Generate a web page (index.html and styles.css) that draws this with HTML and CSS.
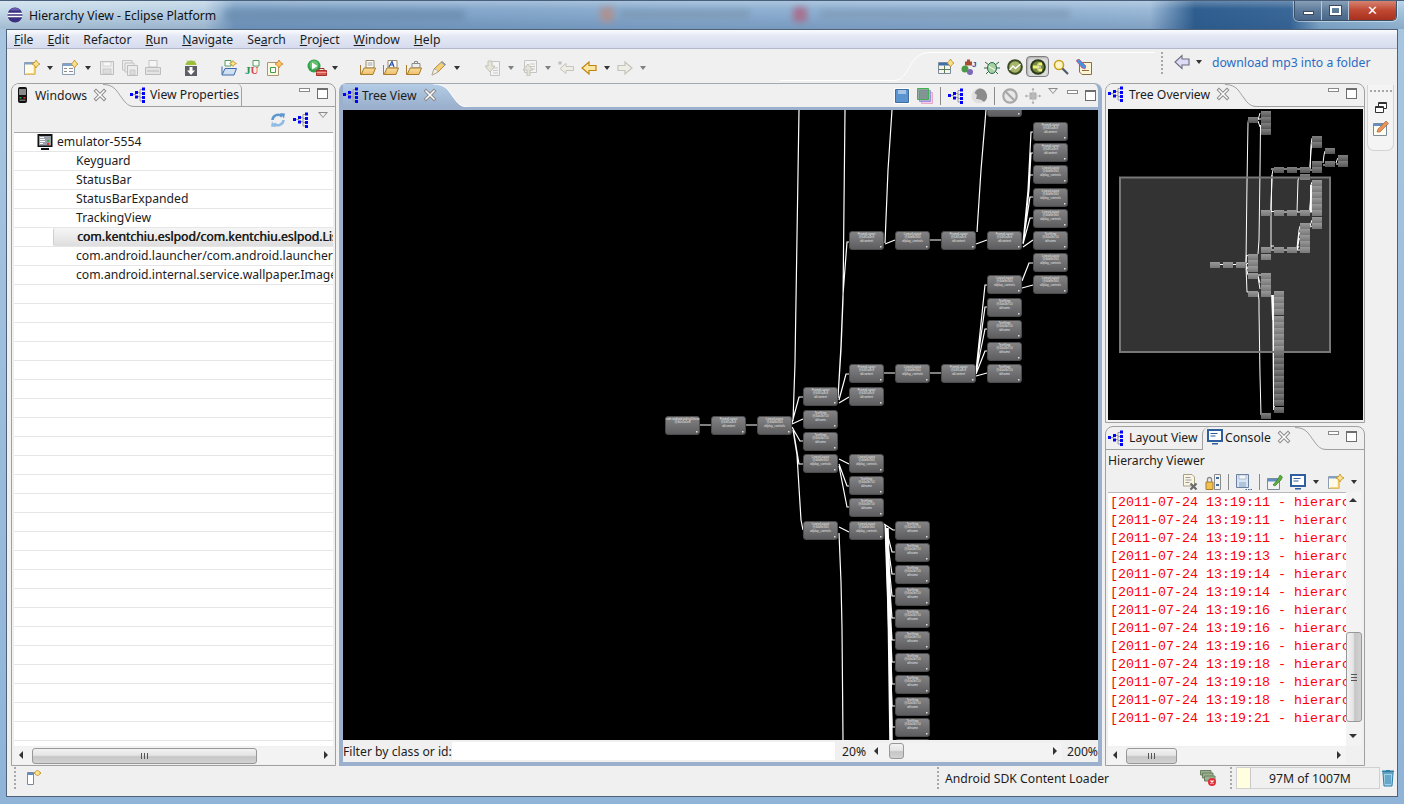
FILE: index.html
```html
<!DOCTYPE html>
<html lang="en">
<head>
  <meta charset="UTF-8">
  <title>Hierarchy View - Eclipse Platform</title>
  <link rel="stylesheet" href="styles.css">
</head>
<body>
  <!-- shared icons -->
  <svg class="sprite" xmlns="http://www.w3.org/2000/svg">
    <defs>
      <linearGradient id="g-node" x1="0" y1="0" x2="0" y2="1"><stop offset="0" stop-color="#848487"/><stop offset="1" stop-color="#5c5c5f"/></linearGradient>
      <linearGradient id="g-ov" x1="0" y1="0" x2="0" y2="1"><stop offset="0" stop-color="#808080"/><stop offset="1" stop-color="#565656"/></linearGradient>
      <linearGradient id="g-tab" x1="0" y1="0" x2="0" y2="1"><stop offset="0" stop-color="#b4cce6"/><stop offset="1" stop-color="#9ab0cc"/></linearGradient>
      <linearGradient id="g-folder" x1="0" y1="0" x2="0" y2="1"><stop offset="0" stop-color="#fdeab8"/><stop offset="1" stop-color="#eebf68"/></linearGradient>
    </defs>
    <symbol id="i-tree" viewBox="0 0 16 16">
      <path d="M3 7.500H6M8 5.500H10M8 9.500H10M10 2.500V14M10 2.500H12M10 6.500H12M10 10.500H12M10 14H12" fill="none" stroke="#9a9a9a"/>
      <path fill="#0000ff" d="M0 6h3v3H0zM5 4h3v3H5zM5 8.500h3v3H5zM12 0.500h3v3h-3zM12 5h3v3h-3zM12 9h3v3h-3zM12 13h3v3h-3z"/>
    </symbol>
    <symbol id="i-close" viewBox="0 0 16 16">
      <path d="M4 4L12 12M12 4L4 12" stroke="#8a8a8a" stroke-width="3.400" stroke-linecap="square" fill="none"/>
      <path d="M4 4L12 12M12 4L4 12" stroke="#fff" stroke-width="1.500" stroke-linecap="square" fill="none"/>
    </symbol>
    <symbol id="i-min" viewBox="0 0 16 16"><rect x="1.500" y="2.500" width="10" height="3" fill="#fff" stroke="#8a8a8a"/></symbol>
    <symbol id="i-max" viewBox="0 0 16 16"><rect x="1.500" y="2.500" width="10" height="10" fill="#fff" stroke="#6e6e6e"/><path d="M2 3.500H11" stroke="#6e6e6e"/></symbol>
    <symbol id="i-new" viewBox="0 0 16 16">
      <path d="M.5 2.500H11V14.500H.5z" fill="#fffbe8" stroke="#8d9db2"/><path d="M1 3h9v1.500H1z" fill="#7ea2cc"/>
      <path d="M10.500 5V14H2" fill="none" stroke="#f0c860" stroke-width="1.500"/>
      <path d="M12 0L13.500 2.500L16 4L13.500 5.500L12 8L10.500 5.500L8 4L10.500 2.500z" fill="#fbe28a" stroke="#c08a20" stroke-width=".8"/>
    </symbol>
    <symbol id="i-newtable" viewBox="0 0 16 16">
      <path d="M.5 3.500H12.500V14.500H.5z" fill="#fbfbfb" stroke="#8d9db2"/><path d="M1 4h11v2H1z" fill="#7ea2cc"/>
      <path d="M2 8h3v1H2zM2 11h3v1H2zM7 8h4v1H7zM7 11h4v1H7z" fill="#8d8d8d"/>
      <path d="M12.500 0L14 2.500L16 4L14 5.500L12.500 8L11 5.500L9 4L11 2.500z" fill="#fbe28a" stroke="#c08a20" stroke-width=".8"/>
    </symbol>
    <symbol id="i-save" viewBox="0 0 16 16">
      <path d="M1.500 1.500H14.500V14.500H1.500z" fill="#ececec" stroke="#bdbdbd"/><path d="M4 2h8v4H4z" fill="#f8f8f8" stroke="#c8c8c8" stroke-width=".7"/><path d="M4 9h8v5H4z" fill="#dcdcdc" stroke="#c0c0c0" stroke-width=".7"/>
    </symbol>
    <symbol id="i-saveall" viewBox="0 0 16 16">
      <path d="M.5 .5H10V10H.5z" fill="#ececec" stroke="#c4c4c4"/><path d="M3 3H12V12H3z" fill="#ececec" stroke="#c4c4c4"/><path d="M5.500 5.500H15.500V15.500H5.500z" fill="#ececec" stroke="#bdbdbd"/><path d="M8 10h5v5H8z" fill="#dcdcdc" stroke="#c0c0c0" stroke-width=".7"/>
    </symbol>
    <symbol id="i-print" viewBox="0 0 16 16">
      <path d="M4 .5H12V7H4z" fill="#f6f6f6" stroke="#c4c4c4"/><path d="M.5 7.500H15.500V14.500H.5z" fill="#e4e4e4" stroke="#bdbdbd"/><path d="M2 10h12v2H2z" fill="#cfcfcf"/>
    </symbol>
    <symbol id="i-android" viewBox="0 0 16 16">
      <path d="M2.500 5a5.500 4.500 0 0 1 11 0z" fill="#9bbf3c"/><path d="M4 .5L5.500 2M12 .5L10.500 2" stroke="#9bbf3c"/>
      <path d="M2 6h12v10H2z" fill="#5c6066"/><path d="M6.500 7h3v3.500H12L8 15L4 10.500h2.500z" fill="#fff"/>
    </symbol>
    <symbol id="i-openclass" viewBox="0 0 16 16">
      <path d="M4 .5H10V6H4z" fill="#fff" stroke="#4f9f5f"/><path d="M12 .5L13.200 2.300L15.500 3.500L13.200 4.700L12 6.500L10.800 4.700L8.500 3.500L10.800 2.300z" fill="#fbe28a" stroke="#c08a20" stroke-width=".7"/>
      <path d="M1 6.500V15H13L15.500 8.500H4L1.500 14" fill="#cfe0f4" stroke="#3a68a8"/>
    </symbol>
    <symbol id="i-newclass" viewBox="0 0 16 16">
      <path d="M.5 2.500H11.500V15.500H.5z" fill="#fff7e0" stroke="#a89878"/><path d="M3.500 7.500H8.500V12.500H3.500z" fill="#fff" stroke="#3f9f4f"/>
      <path d="M12 0L13.500 2.500L16 4L13.500 5.500L12 8L10.500 5.500L8 4L10.500 2.500z" fill="#f8c868" stroke="#d07820" stroke-width=".8"/>
    </symbol>
    <symbol id="i-run" viewBox="0 0 21 17">
      <circle cx="7" cy="7" r="6.500" fill="#2fa04c"/><circle cx="7" cy="6" r="4.500" fill="#66c070"/><path d="M5 3.500L10.500 7L5 10.500z" fill="#fff"/>
      <path d="M9.500 11.500H19.500V16.500H9.500z" fill="#d85a50" stroke="#a03028"/><path d="M12 11.500V9.500H17V11.500" fill="none" stroke="#a03028"/><path d="M9.500 13.500H19.500" stroke="#f0a098"/>
    </symbol>
    <symbol id="i-folderdoc" viewBox="0 0 16 16">
      <path d="M6 .5H14V8H6z" fill="#fff" stroke="#9a8a68"/><path d="M7.500 3h5M7.500 5h5" stroke="#9a9a9a"/>
      <path d="M.5 5V14.500H13L15.500 8H4L1.500 14" fill="url(#g-folder)" stroke="#a87c2c"/>
    </symbol>
    <symbol id="i-folderfont" viewBox="0 0 16 16">
      <path d="M5 .5H14V8H5z" fill="#fff" stroke="#9a8a68"/><path d="M6 7L9 1.500L11 7M7 5H10" fill="none" stroke="#2850a8" stroke-width="1.200"/>
      <path d="M.5 5V14.500H13L15.500 8H4L1.500 14" fill="url(#g-folder)" stroke="#a87c2c"/>
    </symbol>
    <symbol id="i-folderbrief" viewBox="0 0 16 16">
      <path d="M6 3.500H14V8H6zM8.500 3.500V1.500H11.500V3.500" fill="#eee" stroke="#8a8a8a"/>
      <path d="M.5 5V14.500H13L15.500 8H4L1.500 14" fill="url(#g-folder)" stroke="#a87c2c"/>
    </symbol>
    <symbol id="i-pencil" viewBox="0 0 16 16">
      <path d="M1 15L3 9L11 1.500L14.500 4.500L7 12z" fill="#f4cf7c" stroke="#b08a3c"/><path d="M10 2.500L13.500 5.500L14.500 4.500L11 1.500z" fill="#7a9ecb"/><path d="M1 15L3 9L6 10L7 12z" fill="#f2efe6" stroke="#a8a8a8" stroke-width=".7"/>
    </symbol>
    <symbol id="i-nextann" viewBox="0 0 16 16">
      <path d="M5.500 1.500H14.500V15.500H5.500z" fill="#f4f4f4" stroke="#c4c4c4"/><path d="M8 8h5M8 10.500h5M8 13h5" stroke="#c8c8c8"/>
      <path d="M3 1H7V6H10L5 12L0 6H3z" fill="#e6e4da" stroke="#c4c2b4"/>
    </symbol>
    <symbol id="i-prevann" viewBox="0 0 16 16">
      <path d="M2.500 .5H14.500V12.500H2.500z" fill="#f4f4f4" stroke="#c4c4c4"/><path d="M8 4h5M8 6.500h5M8 9h5" stroke="#c8c8c8"/>
      <path d="M5 16V10H1L6 4L11 10H8V16z" fill="#e6e4da" stroke="#c4c2b4"/>
    </symbol>
    <symbol id="i-lastedit" viewBox="0 0 16 16">
      <path d="M.5 1.500H3.500V4.500H.5z" fill="#bdbdbd"/><path d="M15.500 6.500V10.500H8L8 13.500L2 8.500L8 3.500V6.500z" fill="#eeeee6" stroke="#c4c4bc"/>
    </symbol>
    <symbol id="i-back" viewBox="0 0 16 16"><path d="M15 5.500V10.500H8V14L1 8L8 2V5.500z" fill="#fbe7a2" stroke="#c08410" stroke-width="1.200"/></symbol>
    <symbol id="i-forward" viewBox="0 0 16 16"><path d="M1 5.500V10.500H8V14L15 8L8 2V5.500z" fill="#eeeee6" stroke="#c4c4bc" stroke-width="1.200"/></symbol>
    <symbol id="i-backblue" viewBox="0 0 16 16"><path d="M15 5V11H8V14.500L1 8L8 1.500V5z" fill="#dcdcf4" stroke="#6c6c80" stroke-width="1.100"/></symbol>
    <symbol id="i-openpersp" viewBox="0 0 16 16">
      <path d="M.5 3.500H12.500V14.500H.5z" fill="#f6f4ea" stroke="#7a8a9a"/><path d="M1 4h11v2.500H1z" fill="#3f6eb0"/><path d="M6.500 6.500V14M1 10.500H12" stroke="#5a7a5a"/>
      <path d="M12.500 0L14 2.500L16 4L14 5.500L12.500 8L11 5.500L9 4L11 2.500z" fill="#fbe28a" stroke="#c08a20" stroke-width=".8"/>
    </symbol>
    <symbol id="i-bug" viewBox="0 0 16 16">
      <path d="M1 3L5 6M15 3L11 6M0 9H4M16 9H12M2 15L5 12M14 15L11 12" stroke="#2a6a4a" fill="none"/><ellipse cx="8" cy="9" rx="4.500" ry="5.500" fill="#a8d0a0" stroke="#286850"/><path d="M5 7.500L11 11" stroke="#fff"/>
    </symbol>
    <symbol id="i-profile" viewBox="0 0 16 16">
      <circle cx="8" cy="8" r="7.800" fill="#3c4a24"/><circle cx="8" cy="8" r="5.800" fill="#a4b468"/><path d="M2.500 11L6 7L8.500 9.500L13.500 5" fill="none" stroke="#fff" stroke-width="1.400"/>
    </symbol>
    <symbol id="i-hierarchy" viewBox="0 0 16 16">
      <circle cx="8" cy="8" r="7.800" fill="#2a3a18"/><circle cx="8" cy="8" r="5.800" fill="#788c40"/><path d="M5 8H11M8 4.500V11.500" stroke="#fff"/>
      <path d="M3 6.500h4v3H3zM8.500 3.500h3.500v3H8.500zM8.500 9.500h3.500v3H8.500z" fill="#f4f070"/>
    </symbol>
    <symbol id="i-search" viewBox="0 0 16 16">
      <circle cx="6" cy="6" r="4.500" fill="#fdf6c4" stroke="#c8a020" stroke-width="1.600"/><path d="M9.500 9.500L15 15" stroke="#50586c" stroke-width="2.200"/>
    </symbol>
    <symbol id="i-pixel" viewBox="0 0 16 16">
      <path d="M3.500 3.500H15.500V15.500H6L3.500 13z" fill="#fdf4d8" stroke="#8a7040"/><path d="M0 1.500L3 0L10 7L9 10L6 9z" fill="#4a90e0" stroke="#e04050" stroke-width=".6"/><path d="M6 11.500H13" stroke="#8a7040"/>
    </symbol>
    <symbol id="i-refresh" viewBox="0 0 16 16">
      <path d="M2.500 8A5.500 5.500 0 0 1 12 4.500" fill="none" stroke="#5f97cf" stroke-width="2.600"/><path d="M10 1L15 1.500L14 6.500z" fill="#5f97cf"/>
      <path d="M13.500 8A5.500 5.500 0 0 1 4 11.500" fill="none" stroke="#8fbbe4" stroke-width="2.600"/><path d="M6 15L1 14.500L2 9.500z" fill="#8fbbe4"/>
    </symbol>
    <symbol id="i-phone" viewBox="0 0 10 16">
      <rect x="0" y="0" width="9" height="16" rx="2" fill="#111"/><rect x="1" y="2" width="7" height="6" fill="#8a8a8a"/>
      <path d="M1.500 10h2v1.500h-2z" fill="#3ca03c"/><path d="M5.500 10h2v1.500h-2z" fill="#e03030"/><path d="M1.500 12.500h6V14h-6z" fill="#6a6a6a"/>
    </symbol>
    <symbol id="i-device" viewBox="0 0 16 16">
      <path d="M.5 0H15.500V13H.5z" fill="#111"/><path d="M2 2H14V11.500H2z" fill="#9aa0a8"/>
      <path d="M3 3h4v1H3zM3 5h5v1H3zM3 7h5v1H3zM3 9h3v1H3z" fill="#fff"/><path d="M10 6h2v2h-2z" fill="#40b040"/><path d="M10 9h2v2h-2z" fill="#e03030"/><path d="M4 14h8v2H4z" fill="#111"/>
    </symbol>
    <symbol id="i-console" viewBox="0 0 16 16">
      <path d="M1 1H15V12H1z" fill="#fff" stroke="#2e5f9e" stroke-width="2"/><path d="M3.500 4.500h7M3.500 7h5" stroke="#2e5f9e"/><path d="M5 14h6v1.500H5z" fill="#2e5f9e"/>
    </symbol>
    <symbol id="i-saveblue" viewBox="0 0 16 16">
      <path d="M0 0H16V16H0z" fill="#fff"/><path d="M1.500 1.500H14.500V14.500H1.500z" fill="#5c94cf" stroke="#3f6d9c"/><path d="M4 2h8v4H4z" fill="#a4c4e8"/>
    </symbol>
    <symbol id="i-layers" viewBox="0 0 16 16">
      <path d="M4.500 4.500H15.500V15.500H4.500z" fill="#f4cfe0" stroke="#e8a8c8"/><path d="M2.500 2.500H13.500V13.500H2.500z" fill="#a898d8" fill-opacity=".7" stroke="#a090e8"/><path d="M.5 .5H11.500V11.500H.5z" fill="#6a8c78" fill-opacity=".7" stroke="#40b050"/>
    </symbol>
    <symbol id="i-globe" viewBox="0 0 16 16">
      <circle cx="8" cy="8" r="7.500" fill="#e0e0e0"/><path d="M8 .5A7.500 7.500 0 0 1 13 14A9 9 0 0 0 5 11L6 7L3.500 5A8 8 0 0 1 8 .5z" fill="#8c8c8c"/>
    </symbol>
    <symbol id="i-no" viewBox="0 0 16 16">
      <circle cx="8" cy="8" r="6.700" fill="#e8e8e8" stroke="#a8a8a8" stroke-width="2.200"/><path d="M3.500 3.500L12.500 12.500" stroke="#a8a8a8" stroke-width="2.200"/>
    </symbol>
    <symbol id="i-move" viewBox="0 0 16 16">
      <path d="M4.500 4.500H11.500V11.500H4.500z" fill="#b0b0b0"/><path d="M8 0V16M0 8H16" stroke="#c0c0c0"/><path d="M6.500 2L8 0L9.500 2zM6.500 14L8 16L9.500 14zM2 6.500L0 8L2 9.500zM14 6.500L16 8L14 9.500z" fill="#a8a8a8"/>
    </symbol>
    <symbol id="i-clear" viewBox="0 0 16 16">
      <path d="M1.500 .5H10L12.500 3V12H1.500z" fill="#fbf6e4" stroke="#a8a088"/><path d="M3.500 3.500h5M3.500 6h6M3.500 8.500h4" stroke="#9a9a9a"/>
      <path d="M8.500 9.500L14.500 15.500M14.500 9.500L8.500 15.500" stroke="#6a6a6a" stroke-width="2.200"/>
    </symbol>
    <symbol id="i-scrolllock" viewBox="0 0 16 16">
      <path d="M9.500 .5H15.500V15.500H9.500z" fill="#f4f4f4" stroke="#8a8a8a"/><path d="M11 4h3M11 11h3" stroke="#3f6d9c" stroke-width="2"/>
      <path d="M1 8H8V15.500H1z" fill="#f0c050" stroke="#a87c2c"/><path d="M2.500 8V5.500a2 2 0 0 1 4 0V8" fill="none" stroke="#8a8a8a" stroke-width="1.300"/>
    </symbol>
    <symbol id="i-saveas" viewBox="0 0 16 16">
      <path d="M.5 .5H12.500V13.500H.5z" fill="#d8e4f2" stroke="#6a7f9c"/><path d="M3 1h7v4H3z" fill="#f4f8fc" stroke="#8aa0b8" stroke-width=".6"/><path d="M3 8h7v5H3z" fill="#aec4de"/>
      <path d="M9.500 15h1.500v1H9.500zM12 15h1.500v1H12zM14.500 15H16v1h-1.500z" fill="#3f6d9c"/>
    </symbol>
    <symbol id="i-pin" viewBox="0 0 16 16">
      <path d="M.5 4.500H12.500V15.500H.5z" fill="#f4f4f4" stroke="#7a8a9a"/><path d="M1 5h11v2.500H1z" fill="#5f8fc4"/><path d="M6 11L11 5L13 1L15.500 3L14 6L8 12z" fill="#5cab3c" stroke="#2e7a20" stroke-width=".6"/>
    </symbol>
    <symbol id="i-restore" viewBox="0 0 16 16"><path d="M5.500 2.500H13.500V8.500H5.500z" fill="#fff" stroke="#333"/><path d="M2.500 6.500H10.500V12.500H2.500z" fill="#fff" stroke="#333"/><path d="M3 7.500h7M6 3.500h7" stroke="#333"/></symbol>
    <symbol id="i-edit" viewBox="0 0 16 16">
      <path d="M.5 3.500H13.500V15.500H.5z" fill="#fffdf0" stroke="#7a8a9a"/><path d="M1 4h12v2H1z" fill="#5f8fc4"/><path d="M4 12L5 9L13 1L15.500 3.500L7 12z" fill="#e8925c" stroke="#a05c2c" stroke-width=".6"/>
    </symbol>
    <symbol id="i-trimnew" viewBox="0 0 16 16">
      <path d="M1.500 2.500H7.500V14.500H1.500z" fill="#fff" stroke="#7a8a9a"/><path d="M2 3h5v2H2z" fill="#5f8fc4"/>
      <path d="M11.500 0L13 1.500L15 3L13 4.500L11.500 6L10 4.500L8 3L10 1.500z" fill="#fbe28a" stroke="#c08a20" stroke-width=".9"/>
    </symbol>
    <symbol id="i-progress" viewBox="0 0 16 16">
      <path d="M.5 .5H11V5H.5z" fill="#9ab090" stroke="#6a8060"/><path d="M2.500 3H13V8H2.500z" fill="#9ab090" stroke="#6a8060"/><path d="M4.500 6H15V11H4.500z" fill="#9ab090" stroke="#6a8060"/>
      <circle cx="12" cy="12" r="4" fill="#e03038"/><path d="M10.500 10.500L13.500 13.500M13.500 10.500L10.500 13.500" stroke="#fff" stroke-width="1.200"/>
    </symbol>
    <symbol id="i-trash" viewBox="0 0 14 18">
      <path d="M1 2.500H13" stroke="#2e7fa8" stroke-width="2"/><path d="M5 1h4v1H5z" fill="#2e7fa8"/><path d="M2 4H12L11 17H3z" fill="#9fd0e8" stroke="#2e7fa8"/><path d="M5 6V15M7 6V15M9 6V15" stroke="#2e7fa8"/>
    </symbol>
    <symbol id="i-eclipse" viewBox="0 0 16 16">
      <circle cx="8" cy="8" r="7.500" fill="#3a2f80"/><path d="M.5 6.500H15.500M.5 9.500H15.500" stroke="#fff" stroke-width="1.300"/><path d="M3 3.500a6 6 0 0 1 10 0z" fill="#6a5cb0"/>
    </symbol>
    <symbol id="n-box" viewBox="0 0 35 19">
      <rect x=".5" y=".5" width="34" height="18" rx="2.500" fill="url(#g-node)" stroke="#4a4a4d"/>
      <rect x="31" y="15" width="1.500" height="1.500" fill="#ddd"/>
    </symbol>
    <symbol id="ov" viewBox="0 0 10 6"><rect width="10" height="6" fill="url(#g-ov)"/></symbol>
  </svg>

  <header class="titlebar">
    <span class="blur blur-a"></span>
    <span class="blur blur-b"></span>
    <span class="blur blur-c"></span>
    <span class="blur blur-d"></span>
    <span class="blur blur-e"></span>
    <svg class="ico title-logo"><use href="#i-eclipse"/></svg>
    <span class="title-text">Hierarchy View - Eclipse Platform</span>
    <div class="winbtns">
      <span class="winbtn winbtn-min"><i></i></span>
      <span class="winbtn winbtn-max"><i></i></span>
      <span class="winbtn winbtn-close">✕</span>
    </div>
  </header>

  <div class="window">
    <nav class="menubar">
      <span><u>F</u>ile</span>
      <span><u>E</u>dit</span>
      <span>Refactor</span>
      <span><u>R</u>un</span>
      <span><u>N</u>avigate</span>
      <span>Se<u>a</u>rch</span>
      <span><u>P</u>roject</span>
      <span><u>W</u>indow</span>
      <span><u>H</u>elp</span>
    </nav>

    <div class="toolbar">
      <span class="tool"><svg class="ico"><use href="#i-new"/></svg></span>
      <span class="drop"></span>
      <span class="tool ml2"><svg class="ico"><use href="#i-newtable"/></svg></span>
      <span class="drop"></span>
      <span class="tool ml1"><svg class="ico"><use href="#i-save"/></svg></span>
      <span class="tool"><svg class="ico"><use href="#i-saveall"/></svg></span>
      <span class="tool"><svg class="ico"><use href="#i-print"/></svg></span>
      <span class="tool ml15"><svg class="ico"><use href="#i-android"/></svg></span>
      <span class="tool ml15"><svg class="ico"><use href="#i-openclass"/></svg></span>
      <span class="tool">
        <svg class="ico" viewBox="0 0 16 16">
          <path d="M9 .5H15V6H9z" fill="#fff" stroke="#4f9f5f"/>
          <text x="1" y="14" class="ico-letter ico-j">J</text><text x="6.500" y="14" class="ico-letter ico-u">U</text>
        </svg>
      </span>
      <span class="tool"><svg class="ico"><use href="#i-newclass"/></svg></span>
      <span class="tool ml19"><svg class="ico-wide"><use href="#i-run"/></svg></span>
      <span class="drop"></span>
      <span class="tool ml15"><svg class="ico"><use href="#i-folderdoc"/></svg></span>
      <span class="tool"><svg class="ico"><use href="#i-folderfont"/></svg></span>
      <span class="tool"><svg class="ico"><use href="#i-folderbrief"/></svg></span>
      <span class="tool ml2"><svg class="ico"><use href="#i-pencil"/></svg></span>
      <span class="drop"></span>
      <span class="tool ml18"><svg class="ico"><use href="#i-nextann"/></svg></span>
      <span class="drop drop-dim"></span>
      <span class="tool ml1"><svg class="ico"><use href="#i-prevann"/></svg></span>
      <span class="drop drop-dim"></span>
      <span class="tool"><svg class="ico"><use href="#i-lastedit"/></svg></span>
      <span class="tool"><svg class="ico"><use href="#i-back"/></svg></span>
      <span class="drop"></span>
      <span class="tool"><svg class="ico"><use href="#i-forward"/></svg></span>
      <span class="drop drop-dim"></span>

      <div class="toolbar-right">
        <svg class="persp-curve" viewBox="0 0 150 31"><path d="M0 28.500H114C130 28.500 128 .5 150 .5" fill="none" stroke="#fff"/></svg>
        <div class="persp">
          <span class="tool"><svg class="ico"><use href="#i-openpersp"/></svg></span>
          <span class="tool">
            <svg class="ico" viewBox="0 0 16 16">
              <path d="M6 .5h3v2h2v4H4v-4h2z" fill="#a84c30"/><circle cx="4" cy="10" r="3.500" fill="#4c9a48"/><circle cx="9" cy="13" r="3" fill="#7c68b4"/>
              <text x="11" y="8" class="ico-jblue">J</text>
            </svg>
          </span>
          <span class="tool"><svg class="ico"><use href="#i-bug"/></svg></span>
          <span class="tool"><svg class="ico"><use href="#i-profile"/></svg></span>
          <span class="tool tool-on"><svg class="ico"><use href="#i-hierarchy"/></svg></span>
          <span class="tool"><svg class="ico"><use href="#i-search"/></svg></span>
          <span class="tool"><svg class="ico"><use href="#i-pixel"/></svg></span>
        </div>
        <span class="grip grip-bar"></span>
        <div class="mylyn">
          <span class="tool"><svg class="ico"><use href="#i-backblue"/></svg></span>
          <span class="drop"></span>
          <a class="mylyn-link">download mp3 into a folder</a>
        </div>
      </div>
    </div>

    <main class="workbench">
      <!-- left: windows list -->
      <section class="pane pane-left">
        <div class="tabs">
          <div class="tab tab-on tab-windows">
            <svg class="ico-phone"><use href="#i-phone"/></svg>
            <span class="tab-label">Windows</span>
            <svg class="ico tab-x"><use href="#i-close"/></svg>
          </div>
          <svg class="tab-curve" viewBox="0 0 32 24"><path d="M0 .5C12 .5 14 8 19 14C23 20 26 22.500 32 22.500V24H0z" fill="#f0f0f0"/><path d="M0 .5C12 .5 14 8 19 14C23 20 26 22.500 32 22.500" fill="none" stroke="#a0a0a0"/></svg>
          <div class="tab tab-off tab-props">
            <svg class="ico"><use href="#i-tree"/></svg>
            <span class="tab-label">View Properties</span>
          </div>
          <div class="pane-ctl">
            <svg class="ico ctl"><use href="#i-min"/></svg>
            <svg class="ico ctl"><use href="#i-max"/></svg>
          </div>
        </div>
        <div class="view-tools">
          <svg class="ico"><use href="#i-refresh"/></svg>
          <svg class="ico"><use href="#i-tree"/></svg>
          <span class="view-menu"></span>
        </div>
        <div class="window-list">
          <div class="row row-device">
            <svg class="ico"><use href="#i-device"/></svg>
            <span>emulator-5554</span>
          </div>
          <div class="row">Keyguard</div>
          <div class="row">StatusBar</div>
          <div class="row">StatusBarExpanded</div>
          <div class="row">TrackingView</div>
          <div class="row row-selected">com.kentchiu.eslpod/com.kentchiu.eslpod.ListActivity</div>
          <div class="row">com.android.launcher/com.android.launcher2.Launcher</div>
          <div class="row">com.android.internal.service.wallpaper.ImageWallpaper</div>
        </div>
        <div class="hscroll hscroll-left">
          <span class="arrow arrow-l"></span>
          <span class="thumb thumb-left"><i class="thumb-grip"></i></span>
          <span class="hscroll-fill"></span>
          <span class="arrow arrow-r"></span>
        </div>
      </section>

      <!-- center: tree canvas -->
      <section class="pane-tree">
        <div class="tree-head">
          <div class="tab tab-blue">
            <svg class="ico"><use href="#i-tree"/></svg>
            <span class="tab-label">Tree View</span>
            <svg class="ico tab-x"><use href="#i-close"/></svg>
          </div>
          <svg class="tab-curve tab-curve-blue" viewBox="0 0 36 23"><path d="M0 0C14 0 16 8 21 14C25 20 28 23 36 23H0z" fill="url(#g-tab)"/><path d="M0 0C14 0 16 8 21 14C25 20 28 23 36 23" fill="none" stroke="#fff"/></svg>
          <div class="head-tools">
            <svg class="ico"><use href="#i-saveblue"/></svg>
            <svg class="ico"><use href="#i-layers"/></svg>
            <span class="sep"></span>
            <svg class="ico"><use href="#i-tree"/></svg>
            <svg class="ico"><use href="#i-globe"/></svg>
            <span class="sep"></span>
            <svg class="ico"><use href="#i-no"/></svg>
            <svg class="ico"><use href="#i-move"/></svg>
            <span class="view-menu"></span>
            <svg class="ico ctl"><use href="#i-min"/></svg>
            <svg class="ico ctl ctl-last"><use href="#i-max"/></svg>
          </div>
        </div>
        <svg id="treeCanvas" class="tree-canvas" viewBox="343 110 755 630">
          <g class="edges">
            <path d="M700 425H711M746 425H757M792 423L799 397H803M792 424L803 419M792 427L800 441H803M793 428L799 464H803M793 430L797 455L801 520L803 530M793 421L795 363L799 110"/>
            <path d="M838 397L841 350L843 300L845 110M838 398L841 345L843 295L847 242H849M839 400L846 374H849M839 403L849 397"/>
            <path d="M839 459L849 464M839 464L847 486H849M839 466L847 507H849M839 527L849 532M839 533L841 582L842 628L843 740"/>
            <path d="M885 244L895 240M885 243L888 170L892 110M930 240H941M976 244L987 240M977 232L981 170L986 110"/>
            <path d="M1023 243L1028 190L1031 132H1033M1023 243L1029 190L1031 153H1033M1023 243L1030 175H1033M1023 243L1030 197H1033M1023 244L1030 218H1033M1023 247L1033 240M1022 281L1029 263H1033M1022 288L1033 285"/>
            <path d="M884 373H895M930 373H941M976 371L985 285H987M976 372L985 307H987M976 373L985 329H987M976 374L985 351H987M976 376L987 373"/>
            <path d="M884 524L893 530H895M885 525L892 552H895M885 525L892 574H895M885 525L892 596H895M885 525L892 618H895M885 525L892 640H895M885 525L892 662H895M885 525L892 684H895M885 525L892 706H895M885 525L892 727H895"/>
            <path class="edge-fat" d="M887 528L889 600L891 740"/>
          </g>
        </svg>
        <div class="filter-row">
          <span class="filter-label">Filter by class or id:</span>
          <span class="filter-input"></span>
          <span class="zoom-low">20%</span>
          <div class="hscroll hscroll-zoom">
            <span class="arrow arrow-l"></span>
            <span class="thumb thumb-zoom"></span>
            <span class="hscroll-fill"></span>
            <span class="arrow arrow-r"></span>
          </div>
          <span class="zoom-high">200%</span>
        </div>
      </section>

      <!-- right: overview + console -->
      <div class="col-right">
        <section class="pane pane-overview">
          <div class="tabs">
            <div class="tab tab-on tab-overview">
              <svg class="ico"><use href="#i-tree"/></svg>
              <span class="tab-label">Tree Overview</span>
              <svg class="ico tab-x"><use href="#i-close"/></svg>
            </div>
            <svg class="tab-curve" viewBox="0 0 32 24"><path d="M0 .5C12 .5 14 8 19 14C23 20 26 22.500 32 22.500V24H0z" fill="#f0f0f0"/><path d="M0 .5C12 .5 14 8 19 14C23 20 26 22.500 32 22.500" fill="none" stroke="#a0a0a0"/></svg>
            <div class="pane-ctl">
              <svg class="ico ctl"><use href="#i-min"/></svg>
              <svg class="ico ctl"><use href="#i-max"/></svg>
            </div>
          </div>
          <svg id="overviewCanvas" class="overview-canvas" viewBox="1108 109 255 311">
            <g class="edges edges-thin">
              <path d="M1220 264.500H1223M1233 264.500H1236M1246 264L1246.500 255L1248 256M1246 265L1248 263M1246 265L1248 269M1246 266L1248 275M1246 266L1247 292H1248"/>
              <path d="M1246 262L1247 182L1248 123L1248.500 119.500M1258 120L1260 113M1258 119H1261M1258 121L1260 127M1258 254L1259 240L1260 170L1260.500 125M1258 275H1261M1258 276L1260 283M1258 277L1260 289M1258 292L1259 300L1259 310L1260 375L1261 415H1262"/>
              <path d="M1271 211.500H1274M1271 212L1272 175L1273 170M1284 212H1287M1297 212H1300M1297 212L1298 180L1299 177M1310 212H1312M1310 211L1311 185L1312 182M1310 211L1311 191L1312 188M1310 210L1311 197L1312 194"/>
              <path d="M1271 250H1274M1271 249L1271 205L1272 175M1271 246H1274M1284 250H1287M1297 250H1300M1297 248L1299 230L1300 226M1297 249L1299 235L1300 232M1297 250L1299 240L1300 238M1297 250L1299 246"/>
              <path d="M1271 169H1274M1284 169H1287M1297 169H1300M1310 168L1311 145L1312 138M1310 169L1311 150L1312 144M1310 170H1312M1323 163L1324 155L1325 151M1323 165H1325M1336 163L1337 160L1338 158M1336 164H1338M1310 226L1312 220M1310 227L1312 226"/>
              <path class="edge-fat" d="M1272 295L1273 320M1311 185L1311 212M1273 295L1274 410"/>
            </g>
          </svg>
        </section>

        <section class="pane pane-console">
          <div class="tabs">
            <div class="tab tab-off tab-layout">
              <svg class="ico"><use href="#i-tree"/></svg>
              <span class="tab-label">Layout View</span>
            </div>
            <div class="tab tab-on tab-console">
              <svg class="ico"><use href="#i-console"/></svg>
              <span class="tab-label">Console</span>
              <svg class="ico tab-x"><use href="#i-close"/></svg>
            </div>
            <svg class="tab-curve" viewBox="0 0 32 24"><path d="M0 .5C12 .5 14 8 19 14C23 20 26 22.500 32 22.500V24H0z" fill="#f0f0f0"/><path d="M0 .5C12 .5 14 8 19 14C23 20 26 22.500 32 22.500" fill="none" stroke="#a0a0a0"/></svg>
            <div class="pane-ctl">
              <svg class="ico ctl"><use href="#i-min"/></svg>
              <svg class="ico ctl"><use href="#i-max"/></svg>
            </div>
          </div>
          <div class="console-title">Hierarchy Viewer</div>
          <div class="console-tools">
            <svg class="ico"><use href="#i-clear"/></svg>
            <svg class="ico"><use href="#i-scrolllock"/></svg>
            <span class="sep sep-short"></span>
            <svg class="ico"><use href="#i-saveas"/></svg>
            <span class="sep sep-short"></span>
            <svg class="ico"><use href="#i-pin"/></svg>
            <svg class="ico"><use href="#i-console"/></svg>
            <span class="drop"></span>
            <svg class="ico"><use href="#i-new"/></svg>
            <span class="drop"></span>
          </div>
          <div class="console-body">
            <div class="console-log">
              <div>[2011-07-24 13:19:11 - hierarchyviewer]</div>
              <div>[2011-07-24 13:19:11 - hierarchyviewer]</div>
              <div>[2011-07-24 13:19:11 - hierarchyviewer]</div>
              <div>[2011-07-24 13:19:13 - hierarchyviewer]</div>
              <div>[2011-07-24 13:19:14 - hierarchyviewer]</div>
              <div>[2011-07-24 13:19:14 - hierarchyviewer]</div>
              <div>[2011-07-24 13:19:16 - hierarchyviewer]</div>
              <div>[2011-07-24 13:19:16 - hierarchyviewer]</div>
              <div>[2011-07-24 13:19:16 - hierarchyviewer]</div>
              <div>[2011-07-24 13:19:18 - hierarchyviewer]</div>
              <div>[2011-07-24 13:19:18 - hierarchyviewer]</div>
              <div>[2011-07-24 13:19:18 - hierarchyviewer]</div>
              <div>[2011-07-24 13:19:21 - hierarchyviewer]</div>
            </div>
            <div class="vscroll">
              <span class="arrow arrow-u"></span>
              <span class="vscroll-fill"></span>
              <span class="vthumb"><i class="vthumb-grip"></i></span>
              <span class="arrow arrow-d"></span>
            </div>
          </div>
          <div class="hscroll hscroll-console">
            <span class="arrow arrow-l"></span>
            <span class="thumb thumb-console"><i class="thumb-grip"></i></span>
            <span class="hscroll-fill"></span>
            <span class="arrow arrow-r"></span>
          </div>
        </section>
      </div>

      <aside class="trim">
        <span class="trim-dots"></span>
        <svg class="ico"><use href="#i-restore"/></svg>
        <svg class="ico"><use href="#i-edit"/></svg>
      </aside>
    </main>

    <footer class="statusbar">
      <span class="grip grip-status"></span>
      <svg class="ico status-new"><use href="#i-trimnew"/></svg>
      <span class="status-spring"></span>
      <span class="grip grip-status"></span>
      <span class="status-job">Android SDK Content Loader</span>
      <svg class="ico status-progress"><use href="#i-progress"/></svg>
      <span class="grip grip-status"></span>
      <div class="heap">
        <span class="heap-used"></span>
        <span class="heap-text">97M of 1007M</span>
      </div>
      <svg class="status-trash"><use href="#i-trash"/></svg>
    </footer>
  </div>
  <script src="tree.js"></script>
</body>
</html>
```
FILE: styles.css
```css
* { box-sizing: border-box; }
html, body { margin: 0; height: 804px; overflow: hidden; }
body {
  font-family: "Noto Sans", "Open Sans", sans-serif;
  font-size: 12.200px;
  color: #1c1c1c;
  background: linear-gradient(to bottom, #a8c6e0, #8fb4d8);
}
.sprite { display: block; width: 0; height: 0; }
.ico { width: 16px; height: 16px; flex: none; display: block; }
.ico-wide { width: 21px; height: 17px; flex: none; display: block; }
.ico-phone { width: 10px; height: 16px; flex: none; display: block; }
.ico-letter { font: bold 11px "Liberation Serif", serif; }
.ico-j { fill: #1f8f4f; }
.ico-u { fill: #d84a50; }
.ico-jblue { fill: #2850a8; font: bold 8px "Liberation Sans", sans-serif; }
.node-text { font: 3px "Liberation Sans", sans-serif; fill: #fff; fill-opacity: .85; text-anchor: middle; }

/* title bar */
.titlebar {
  height: 29px;
  display: flex;
  align-items: center;
  position: relative;
  overflow: hidden;
  border-top: 1px solid #48607c;
  background:
    linear-gradient(to bottom, rgba(255,255,255,.25) 0, rgba(255,255,255,0) 8px, rgba(30,70,120,.22) 100%),
    linear-gradient(to right, #c8dcea 0, #bcd2e4 205px, #7ea2c6 235px, #8fb0d2 700px, #94b4d4 1000px, #9cbad8 1150px, #2f5f90 1195px, #3a6898 1290px, #8eb4d2 1320px, #a8c8e0 100%);
}
.blur { position: absolute; filter: blur(3px); border-radius: 3px; opacity: .75; }
.blur-a { left: 225px; top: 9px; width: 240px; height: 11px; background: #6a8cae; }
.blur-b { left: 600px; top: 6px; width: 14px; height: 15px; background: #b88c80; }
.blur-c { left: 620px; top: 9px; width: 130px; height: 9px; background: #7c97b2; }
.blur-d { left: 793px; top: 6px; width: 14px; height: 15px; background: #b0607c; }
.blur-e { left: 820px; top: 9px; width: 250px; height: 9px; background: #7f9ab6; }
.title-logo { margin-left: 7px; position: relative; }
.title-text { margin-left: 6px; position: relative; color: #111; }
.winbtns {
  position: absolute;
  left: 1294px;
  top: -1px;
  width: 103px;
  height: 21px;
  display: flex;
  border: 1px solid #3c5068;
  border-top: 0;
  border-radius: 0 0 5px 5px;
  overflow: hidden;
  box-shadow: 0 0 0 1px rgba(255,255,255,.45);
}
.winbtn { display: flex; align-items: center; justify-content: center; height: 100%; }
.winbtn-min, .winbtn-max {
  width: 27px;
  background: linear-gradient(to bottom, #8da4bc, #5f7c9a 50%, #48668a);
  border-right: 1px solid #b8c8d8;
}
.winbtn-min i { width: 11px; height: 4px; background: #fff; border: 1px solid #3c4a5c; margin-top: 6px; }
.winbtn-max i { width: 11px; height: 9px; border: 2px solid #fff; outline: 1px solid #3c4a5c; }
.winbtn-close {
  flex: 1;
  background: linear-gradient(to bottom, #d88a78, #c04a34 50%, #a8301e);
  color: #fff;
  font: bold 13px "DejaVu Sans", sans-serif;
}

/* window shell */
.window {
  margin: 0 6px;
  height: 768px;
  border: 1px solid #50627a;
  background: #f0f0f0;
  display: flex;
  flex-direction: column;
}
.menubar {
  height: 19px;
  flex: none;
  display: flex;
  gap: 14px;
  padding-left: 7px;
  align-items: center;
  background: linear-gradient(to bottom, #fbfcfe 0, #e4e8f4 35%, #d6dcee 100%);
  border-bottom: 1px solid #b4b8cc;
}
.toolbar {
  height: 34px;
  flex: none;
  display: flex;
  align-items: center;
  padding: 3px 0 0 13.500px;
}
.tool { width: 23px; height: 22px; display: flex; align-items: center; justify-content: center; flex: none; }
.tool-on {
  border: 1px solid #7e7e7e;
  border-radius: 4px;
  background: #dcdcdc;
  box-shadow: inset 1px 1px 2px #aaa;
  height: 21px;
}
.drop { width: 13px; height: 22px; flex: none; position: relative; }
.drop::after {
  content: "";
  position: absolute;
  left: 3px;
  top: 9px;
  border: 3.500px solid transparent;
  border-top: 4px solid #333;
  border-bottom: 0;
}
.drop-dim::after { border-top-color: #808080; }
.ml1 { margin-left: 1px; }
.ml2 { margin-left: 2px; }
.ml15 { margin-left: 15px; }
.ml18 { margin-left: 18px; }
.ml19 { margin-left: 19px; }
.toolbar-right {
  margin-left: auto;
  width: 617px;
  height: 100%;
  display: flex;
  align-items: center;
  flex: none;
}
.persp-curve { width: 150px; height: 31px; flex: none; align-self: flex-start; }
.persp {
  width: 225px;
  height: 31px;
  flex: none;
  align-self: flex-start;
  padding-left: 4px;
  border-top: 1px solid #fff;
  display: flex;
  align-items: center;
  padding-bottom: 3px;
}
.grip {
  width: 2px;
  flex: none;
  background: repeating-linear-gradient(to bottom, #a8a8a8 0 2px, transparent 2px 4px);
}
.grip-bar { height: 24px; margin: 0 7px 0 6px; align-self: flex-start; }
.mylyn { height: 26px; display: flex; align-items: center; align-self: flex-start; flex: none; margin-top: -3px; }
.mylyn-link { color: #2a6cc4; margin-left: 6px; white-space: nowrap; }

/* workbench */
.workbench {
  flex: none;
  height: 683px;
  display: flex;
  padding-left: 4px;
  align-items: flex-start;
}
.pane {
  border: 1px solid #a0a0a0;
  border-radius: 8px 8px 0 0;
  background: #f0f0f0;
  display: flex;
  flex-direction: column;
  flex: none;
}
.pane-left { width: 325px; height: 683px; margin-right: 3px; }
.tabs {
  height: 23px;
  flex: none;
  display: flex;
  align-items: stretch;
  border-bottom: 1px solid #a0a0a0;
}
.tab { display: flex; align-items: center; flex: none; height: 23px; padding-bottom: 1px; }
.tab-label { white-space: nowrap; }
.tab-on { background: #f0f0f0; border-radius: 7px 0 0 0; }
.tab-x { margin-left: 5px; position: relative; }
.tab-curve { width: 32px; height: 24px; flex: none; }
.tab-off { height: 22px; }
.tab-windows { width: 91px; padding-left: 6px; }
.tab-windows .tab-label { margin-left: 7px; }
.tab-props {
  margin-left: -6px;
  width: 113px;
  padding-left: 1px;
  border-right: 1px solid #a0a0a0;
  border-radius: 0 5px 0 0;
}
.tab-props .tab-label { margin-left: 4px; }
.pane-ctl { margin-left: auto; display: flex; gap: 2px; padding: 2px 3px 0 0; }
.ctl { width: 16px; height: 16px; }
.view-tools {
  height: 25px;
  flex: none;
  display: flex;
  align-items: center;
  justify-content: flex-end;
  gap: 7px;
  padding-right: 6px;
}
.view-menu { width: 11px; height: 9px; flex: none; position: relative; margin: -6px 0 0 2px; }
.view-menu::after {
  content: "";
  position: absolute;
  left: 0;
  top: 0;
  border: 5px solid transparent;
  border-top: 6px solid #8a8a8a;
  border-bottom: 0;
}
.view-menu::before {
  content: "";
  position: absolute;
  left: 2px;
  top: 1px;
  z-index: 1;
  border: 3px solid transparent;
  border-top: 4px solid #f0f0f0;
  border-bottom: 0;
}
.window-list {
  height: 614px;
  flex: none;
  margin: 0 2px 0 2px;
  border-top: 1px solid #a8a8a8;
  background: repeating-linear-gradient(to bottom, #fff 0 18px, #e6e6e6 18px 19px);
  overflow: hidden;
}
.row {
  height: 19px;
  line-height: 18px;
  padding-left: 62px;
  white-space: nowrap;
  overflow: hidden;
}
.row-device { display: flex; align-items: center; padding: 0 0 1px 23px; gap: 4px; }
.row-selected {
  margin-left: 39px;
  padding-left: 23px;
  height: 18px;
  margin-bottom: 1px;
  border-left: 1px solid #d0d0d0;
  background: linear-gradient(to bottom, #f6f6f6, #dedede);
  text-shadow: .4px 0 0 #111;
  border-radius: 2px 0 0 2px;
}

/* scrollbars */
.hscroll {
  height: 17px;
  display: flex;
  align-items: center;
  background: #f3f3f3;
  flex: none;
}
.hscroll-left { margin: 1px 2px 0 2px; }
.hscroll-fill { flex: 1; }
.arrow { width: 18px; height: 17px; flex: none; position: relative; }
.arrow::after { content: ""; position: absolute; border: 4px solid transparent; }
.arrow-l::after { left: 5px; top: 4px; border-right: 4px solid #333; border-left: 0; }
.arrow-r::after { right: 5px; top: 4px; border-left: 4px solid #333; border-right: 0; }
.arrow-u::after { left: 3px; top: 6px; border-bottom: 4px solid #333; border-top: 0; }
.arrow-d::after { left: 3px; top: 6px; border-top: 4px solid #333; border-bottom: 0; }
.thumb {
  height: 16px;
  flex: none;
  border: 1px solid #989898;
  border-radius: 3px;
  background: linear-gradient(to bottom, #f2f2f2, #e4e4e4 45%, #c6c6c6 55%, #d2d2d2);
  display: flex;
  align-items: center;
  justify-content: center;
}
.thumb-grip { width: 7px; height: 6px; background: repeating-linear-gradient(to right, #555 0 1px, transparent 1px 3px); }
.thumb-left { width: 225px; }
.thumb-console { width: 51px; }
.thumb-zoom { width: 15px; margin-left: 2px; }

/* tree view */
.pane-tree {
  width: 763px;
  height: 683px;
  flex: none;
  margin-right: 3px;
  border: 4px solid #9ab0cc;
  border-top: 1px solid #a4a8b0;
  border-radius: 8px 8px 0 0;
  background: #f0f0f0;
  display: flex;
  flex-direction: column;
}
.tree-head {
  height: 26px;
  flex: none;
  display: flex;
  border-bottom: 3px solid #9ab0cc;
}
.tab-blue {
  width: 90px;
  background: linear-gradient(to bottom, #b4cce6, #9ab0cc);
  padding-left: 0;
}
.tab-blue .tab-label { margin-left: 3px; }
.tab-blue .tab-x { margin-left: 5px; }
.tab-curve-blue { width: 36px; height: 23px; }
.head-tools {
  margin-left: auto;
  display: flex;
  align-items: center;
  gap: 7px;
  margin-right: -1.500px;
  height: 23px;
}
.ctl-last { margin-left: -5px; }
.head-tools .view-menu { margin-left: 0; }
.sep { width: 1px; height: 18px; background: #8a8a8a; flex: none; }
.tree-canvas { width: 755px; height: 630px; display: block; flex: none; background: #000; }
.edges path { fill: none; stroke: #fff; stroke-width: 1.200; }
.edges .edge-fat { stroke-width: 3.500; }
.edges-thin path { stroke-width: 1; }
.edges-thin .edge-fat { stroke-width: 1.800; }
.filter-row {
  height: 23px;
  flex: none;
  display: flex;
  align-items: center;
  padding-bottom: 1px;
}
.filter-label { white-space: nowrap; width: 109px; flex: none; }
.filter-input { width: 383px; height: 18px; background: #fff; flex: none; }
.zoom-low { width: 34px; padding-left: 7px; flex: none; }
.hscroll-zoom { width: 193px; }
.zoom-high { flex: 1; text-align: right; }

/* right column */
.col-right { width: 260px; flex: none; margin-right: 2px; display: flex; flex-direction: column; gap: 3px; }
.pane-overview { height: 340px; }
.tab-overview { width: 119px; padding: 0 0 3px 2px; }
.tab-overview .tab-label { margin-left: 5px; }
.overview-canvas {
  width: 255px;
  height: 311px;
  display: block;
  flex: none;
  margin: 2px 0 0 2px;
  background: #000;
}
.viewport { fill: rgba(255,255,255,.2); stroke: #777; stroke-width: 2; }
.pane-console { height: 340px; }
.tab-layout { width: 96px; padding-left: 2px; }
.tab-layout .tab-label { margin-left: 5px; }
.tab-console {
  width: 93px;
  padding: 0 0 3px 4px;
  border-left: 1px solid #a0a0a0;
  border-radius: 7px 0 0 0;
}
.tab-console .tab-label { margin-left: 2px; }
.console-title { height: 21px; flex: none; line-height: 21px; padding-left: 2px; }
.console-tools {
  height: 21px;
  flex: none;
  display: flex;
  align-items: center;
  justify-content: flex-end;
  gap: 7px;
  padding-right: 5px;
}
.console-tools .drop { margin: 0 -2px 0 -3px; }
.sep-short { height: 16px; }
.console-body { height: 254px; flex: none; display: flex; margin-left: 2px; }
.console-log {
  width: 238px;
  flex: none;
  background: #fff;
  border-top: 1px solid #b8b8b8;
  overflow: hidden;
  padding: 1px 0 0 2px;
  font: 13.330px/18px "Liberation Mono", monospace;
  color: #f00;
  white-space: nowrap;
}
.vscroll { width: 16px; flex: none; background: #f3f3f3; display: flex; flex-direction: column; align-items: center; }
.vscroll-fill { height: 122px; flex: none; }
.vthumb {
  width: 16px;
  height: 90px;
  flex: none;
  border: 1px solid #989898;
  border-radius: 3px;
  background: linear-gradient(to right, #f2f2f2, #e4e4e4 45%, #c6c6c6 55%, #d2d2d2);
  display: flex;
  align-items: center;
  justify-content: center;
}
.vthumb-grip { width: 6px; height: 7px; background: repeating-linear-gradient(to bottom, #555 0 1px, transparent 1px 3px); }
.vscroll .arrow { height: 18px; width: 16px; }
.vscroll .arrow-d { margin-top: auto; }
.hscroll-console { width: 238px; margin: 1px 0 0 2px; }

.trim {
  width: 27px;
  height: 66px;
  flex: none;
  margin-top: 2px;
  border: 1px solid #d4d4d4;
  border-top: 0;
  border-radius: 0 0 7px 7px;
  display: flex;
  flex-direction: column;
  align-items: center;
  gap: 4px;
  background: #f4f4f4;
}
.trim-dots {
  width: 22px;
  height: 2px;
  flex: none;
  margin: 5px 0 4px;
  background: repeating-linear-gradient(to right, #a8a8a8 0 2px, transparent 2px 4px);
}

/* status line */
.statusbar {
  flex: 1;
  display: flex;
  align-items: center;
  padding: 0 0 6px 7px;
}
.grip-status { height: 22px; }
.status-new { margin-left: 10px; }
.status-spring { width: 895px; flex: none; }
.status-job { margin-left: 6px; width: 255px; flex: none; white-space: nowrap; }
.status-progress { margin-right: 14px; }
.heap {
  margin-left: 4px;
  width: 144px;
  height: 22px;
  flex: none;
  display: flex;
  align-items: center;
  border: 1px solid #d0d0d0;
}
.heap-used { width: 14px; height: 100%; background: #ffffe0; border-right: 1px solid #c8c8c8; flex: none; }
.heap-text { flex: 1; text-align: center; padding-right: 10px; }
.status-trash { width: 14px; height: 18px; flex: none; margin-left: 1px; }
```
FILE: tree.js
```js
// boxes of the view tree: x, y, kind (page pixels, same as the svg viewBox)
const LABELS = {
  root: ['com.android.policy.Decor', '@44c0a1e8'],
  frame: ['FrameLayout', '@44f1a3c8', 'id/content'],
  text: ['TextView', '@44e2b710', 'id/name'],
  long: ['LinearLayout', '@44d9c060', 'id/play_controls']
};

const NODES = [
  [665, 416, 'root'], [711, 416, 'frame'], [757, 416, 'long'],
  [803, 387, 'frame'], [803, 410, 'text'], [803, 432, 'text'], [803, 454, 'long'], [803, 521, 'long'],
  [849, 231, 'frame'], [849, 364, 'frame'], [849, 387, 'frame'], [849, 454, 'long'], [849, 476, 'text'], [849, 498, 'text'], [849, 521, 'long'],
  [895, 231, 'long'], [895, 364, 'long'],
  [895, 521, 'text'], [895, 543, 'text'], [895, 565, 'text'], [895, 587, 'text'], [895, 609, 'text'],
  [895, 631, 'text'], [895, 653, 'text'], [895, 675, 'text'], [895, 697, 'text'], [895, 718, 'text'],
  [941, 231, 'frame'], [941, 364, 'frame'],
  [987, 231, 'frame'], [987, 275, 'long'], [987, 298, 'text'], [987, 320, 'text'], [987, 342, 'text'], [987, 364, 'text'],
  [1033, 122, 'frame'], [1033, 143, 'frame'], [1033, 165, 'long'], [1033, 188, 'long'], [1033, 209, 'long'], [1033, 231, 'text'], [1033, 253, 'long'], [1033, 275, 'long']
];

// boxes cut by the canvas edge keep no label
const CUT_NODES = [[987, 98], [895, 739]];

// same tree in the overview, column x then row tops
const OVERVIEW = [
  [1210, [262]], [1223, [262]], [1236, [262]],
  [1248, [117, 254, 260, 266, 273, 291]],
  [1261, [111, 117, 123, 129, 210, 247, 254, 273, 279, 285, 291, 413]],
  [1274, [167, 210, 247, 291, 297, 303, 309, 316, 322, 328, 334, 340, 346, 352, 358, 364, 370, 376, 382, 388, 394, 400, 407]],
  [1287, [167, 210, 247]],
  [1300, [167, 174, 210, 223, 229, 235, 241, 247]],
  [1312, [136, 142, 161, 167, 180, 186, 192, 198, 204, 210, 217, 223]],
  [1325, [148, 161]],
  [1338, [155, 161]]
];

const SVG_NS = 'http://www.w3.org/2000/svg';

function svgEl(name, attrs) {
  const el = document.createElementNS(SVG_NS, name);
  Object.keys(attrs).forEach(k => el.setAttribute(k, attrs[k]));
  return el;
}

const treeCanvas = document.getElementById('treeCanvas');
CUT_NODES.forEach(([x, y]) => {
  treeCanvas.appendChild(svgEl('use', { href: '#n-box', x, y, width: 35, height: 19 }));
});
NODES.forEach(([x, y, kind]) => {
  treeCanvas.appendChild(svgEl('use', { href: '#n-box', x, y, width: 35, height: 19 }));
  LABELS[kind].forEach((line, i) => {
    const label = svgEl('text', { class: 'node-text', x: x + 17.5, y: y + 3.5 + i * 3.6 });
    label.textContent = line;
    treeCanvas.appendChild(label);
  });
});

const overviewCanvas = document.getElementById('overviewCanvas');
OVERVIEW.forEach(([x, tops]) => {
  tops.forEach(y => {
    overviewCanvas.appendChild(svgEl('use', { href: '#ov', x, y, width: 10, height: 6 }));
  });
});
overviewCanvas.appendChild(svgEl('rect', { class: 'viewport', x: 1120, y: 177.5, width: 210, height: 174.5 }));
```
